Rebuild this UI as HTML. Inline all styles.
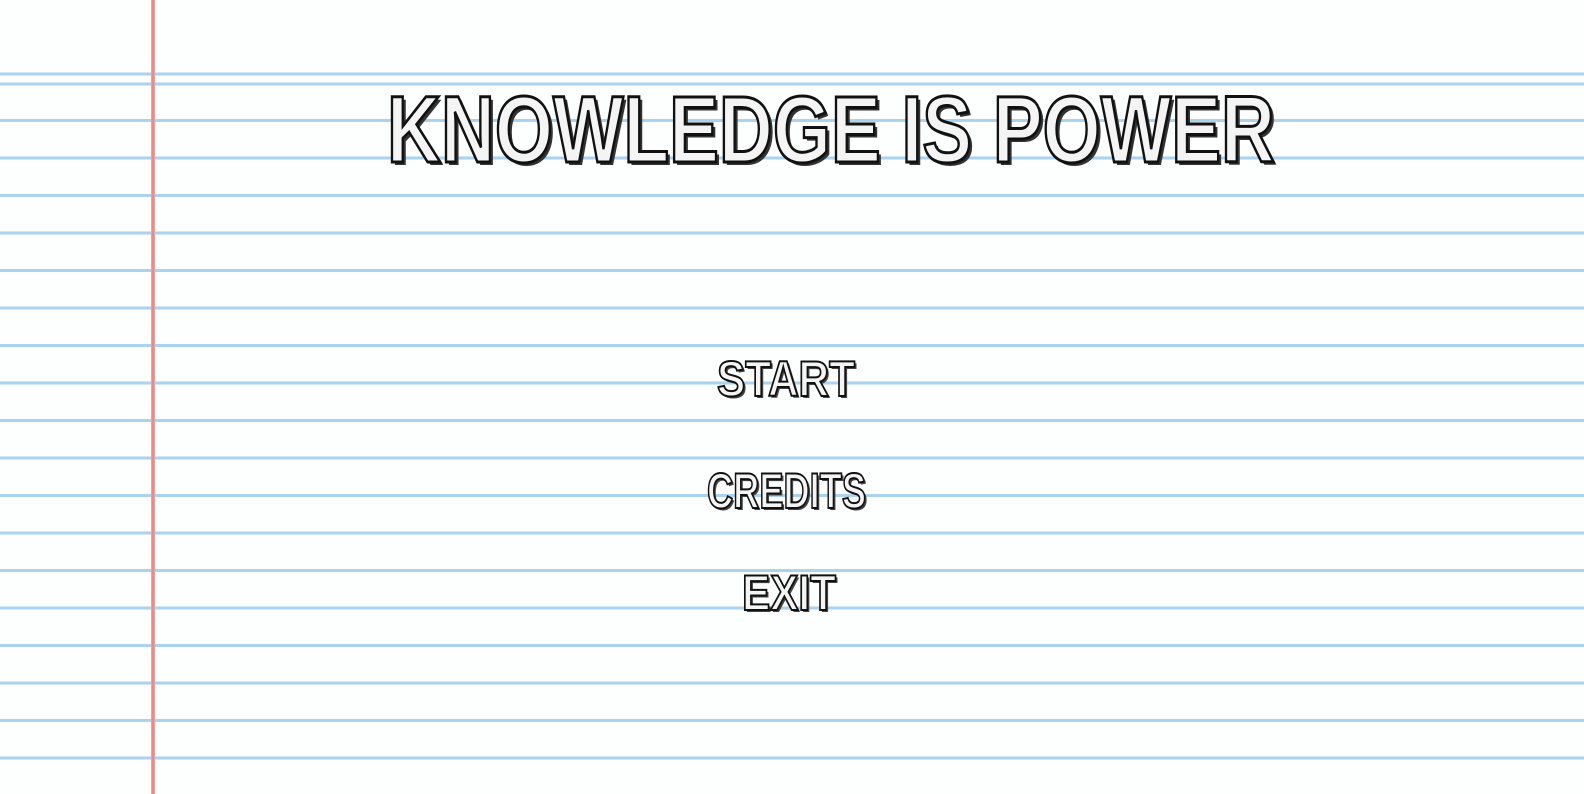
<!DOCTYPE html>
<html><head><meta charset="utf-8"><style>
html,body{margin:0;padding:0;width:1584px;height:794px;overflow:hidden;background:#fff}
</style></head><body>
<svg width="1584" height="794" xmlns="http://www.w3.org/2000/svg" style="display:block">
<rect width="1584" height="794" fill="#fdfefe"/>
<g stroke="#a9d3ee" stroke-width="3">
<line x1="0" x2="1584" y1="74" y2="74"/>
<line x1="0" x2="1584" y1="84" y2="84"/>
<line x1="0" x2="1584" y1="120.5" y2="120.5"/>
<line x1="0" x2="1584" y1="158" y2="158"/>
<line x1="0" x2="1584" y1="195.5" y2="195.5"/>
<line x1="0" x2="1584" y1="233" y2="233"/>
<line x1="0" x2="1584" y1="270.5" y2="270.5"/>
<line x1="0" x2="1584" y1="308" y2="308"/>
<line x1="0" x2="1584" y1="345.5" y2="345.5"/>
<line x1="0" x2="1584" y1="383" y2="383"/>
<line x1="0" x2="1584" y1="420.5" y2="420.5"/>
<line x1="0" x2="1584" y1="458" y2="458"/>
<line x1="0" x2="1584" y1="495.5" y2="495.5"/>
<line x1="0" x2="1584" y1="533" y2="533"/>
<line x1="0" x2="1584" y1="570.5" y2="570.5"/>
<line x1="0" x2="1584" y1="608" y2="608"/>
<line x1="0" x2="1584" y1="645.5" y2="645.5"/>
<line x1="0" x2="1584" y1="683" y2="683"/>
<line x1="0" x2="1584" y1="720.5" y2="720.5"/>
<line x1="0" x2="1584" y1="758" y2="758"/>
</g>
<rect x="151" y="0" width="4" height="794" fill="#f0a0a0"/>
<rect x="152" y="0" width="2" height="794" fill="#ec8a88"/>
<g font-family="Liberation Sans, sans-serif" font-weight="bold">
<text x="390" y="165" font-size="95" textLength="888" lengthAdjust="spacingAndGlyphs" fill="#333">KNOWLEDGE IS POWER</text>
<text x="387" y="162" font-size="95" textLength="888" lengthAdjust="spacingAndGlyphs" fill="#f4f4f4" stroke="#111" stroke-width="3">KNOWLEDGE IS POWER</text>
<g fill="#444">
<text x="719" y="398" font-size="50" textLength="138" lengthAdjust="spacingAndGlyphs">START</text>
<text x="709" y="510" font-size="50" textLength="159" lengthAdjust="spacingAndGlyphs">CREDITS</text>
<text x="744" y="612" font-size="50" textLength="94" lengthAdjust="spacingAndGlyphs">EXIT</text>
</g>
<g fill="#f4f4f4" stroke="#111" stroke-width="2">
<text x="717" y="396" font-size="50" textLength="138" lengthAdjust="spacingAndGlyphs">START</text>
<text x="707" y="508" font-size="50" textLength="159" lengthAdjust="spacingAndGlyphs">CREDITS</text>
<text x="742" y="610" font-size="50" textLength="94" lengthAdjust="spacingAndGlyphs">EXIT</text>
</g>
</g>
</svg>
</body></html>
